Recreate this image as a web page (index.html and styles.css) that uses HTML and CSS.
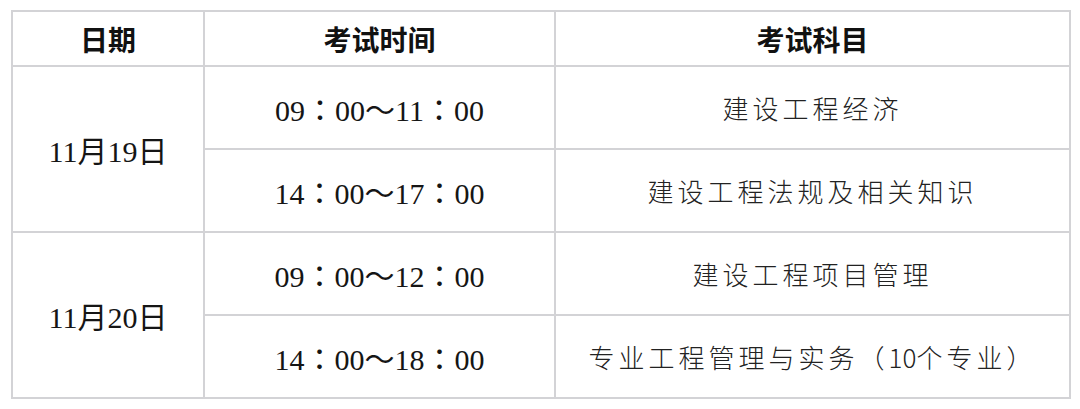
FILE: index.html
```html
<!DOCTYPE html>
<html lang="zh-CN">
<head>
<meta charset="utf-8">
<title>考试安排</title>
<link rel="stylesheet" href="styles.css">
</head>
<body>
<table class="exam">
  <colgroup>
    <col class="c-date">
    <col class="c-time">
    <col class="c-subj">
  </colgroup>
  <thead>
    <tr class="head">
      <th>日期</th>
      <th>考试时间</th>
      <th>考试科目</th>
    </tr>
  </thead>
  <tbody>
    <tr class="r1">
      <td class="date" rowspan="2">11月19日</td>
      <td class="time">09：00～11：00</td>
      <td class="subj">建设工程经济</td>
    </tr>
    <tr class="r2">
      <td class="time">14：00～17：00</td>
      <td class="subj">建设工程法规及相关知识</td>
    </tr>
    <tr class="r1">
      <td class="date" rowspan="2">11月20日</td>
      <td class="time">09：00～12：00</td>
      <td class="subj">建设工程项目管理</td>
    </tr>
    <tr class="r2">
      <td class="time">14：00～18：00</td>
      <td class="subj">专业工程管理与实务（<span class="num">10</span>个专业）</td>
    </tr>
  </tbody>
</table>
</body>
</html>
```

FILE: styles.css
```css
html, body {
  margin: 0;
  padding: 0;
  background: #ffffff;
}

body {
  padding: 10px 0 0 11px;
}

.exam {
  border-collapse: collapse;
  table-layout: fixed;
  width: 1058px;
  color: #111;
}

.c-date { width: 192px; }
.c-time { width: 351px; }
.c-subj { width: 515px; }

.exam th,
.exam td {
  border: 2px solid #d3d3d6;
  padding: 0;
  text-align: center;
  vertical-align: middle;
}

.head th {
  height: 53px;
  font-family: "Noto Sans CJK SC", sans-serif;
  font-weight: 700;
  font-size: 28px;
  line-height: 1;
  color: #111;
}

.r1 td, .r2 td {
  height: 81px;
}

.exam td.date {
  font-family: "Liberation Serif", "Noto Sans CJK TC", serif;
  font-size: 30px;
  padding-top: 0;
  color: #151515;
}

.time {
  font-family: "Liberation Serif", "Noto Sans CJK TC", serif;
  font-size: 30px;
  color: #151515;
}

.subj {
  font-family: "Noto Sans CJK SC", sans-serif;
  font-weight: 300;
  font-size: 26px;
  letter-spacing: 4px;
  color: #222;
}

.subj .num {
  letter-spacing: 0;
}
```
